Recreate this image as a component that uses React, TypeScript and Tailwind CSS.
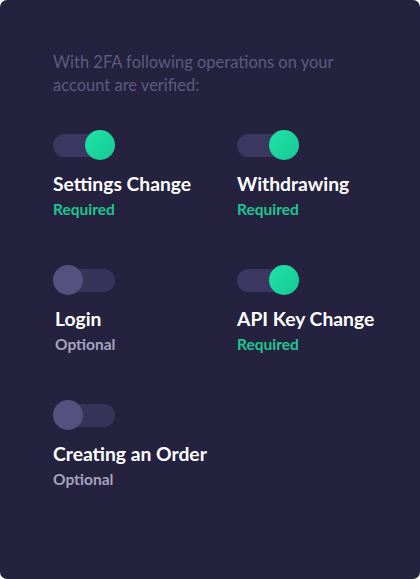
const ops = [
  [
    { title: 'Settings Change', on: true },
    { title: 'Withdrawing', on: true },
  ],
  [
    { title: 'Login', on: false, nudge: true },
    { title: 'API Key Change', on: true },
  ],
  [{ title: 'Creating an Order', on: false }],
];

function Toggle({ on }: { on: boolean }) {
  return (
    <div className="relative h-[30px] w-[62px] flex items-center">
      <div className={`h-[23px] w-full rounded-full ${on ? 'bg-[#3a3860]' : 'bg-[#363459]'}`} />
      <div
        className={`absolute top-0 h-[30px] w-[30px] rounded-full ${
          on ? 'right-0 bg-gradient-to-br from-[#20e3a6] to-[#15c995]' : 'left-0 bg-[#55507e]'
        }`}
      />
    </div>
  );
}

export default function App() {
  return (
    <div className="w-[420px] h-[579px] bg-white">
      <div
        className="h-full w-full rounded-[7px] bg-[#24223f] px-[53px] pt-[51px]"
        style={{ fontFamily: 'Lato, "Open Sans", sans-serif' }}
      >
        <p className="text-[16.5px] leading-[23px] text-[#5e5b80]">
          With 2FA following operations on your account are verified:
        </p>

        <div className="mt-[33px] flex flex-col gap-[46px]">
          {ops.map((row, i) => (
            <div key={i} className="grid grid-cols-[184px_1fr]">
              {row.map((op) => (
                <div key={op.title} className={op.nudge ? 'pl-[2px]' : ''}>
                  <div className={op.nudge ? '-ml-[2px]' : ''}>
                    <Toggle on={op.on} />
                  </div>
                  <div className="mt-[12px] whitespace-nowrap text-[19.3px] leading-[24px] font-bold text-white">
                    {op.title}
                  </div>
                  <div
                    className={`mt-[3px] text-[15.5px] leading-[20px] font-bold ${
                      op.on ? 'text-[#1ec691]' : 'text-[#a6a3bd]'
                    }`}
                  >
                    {op.on ? 'Required' : 'Optional'}
                  </div>
                </div>
              ))}
            </div>
          ))}
        </div>
      </div>
    </div>
  );
}
